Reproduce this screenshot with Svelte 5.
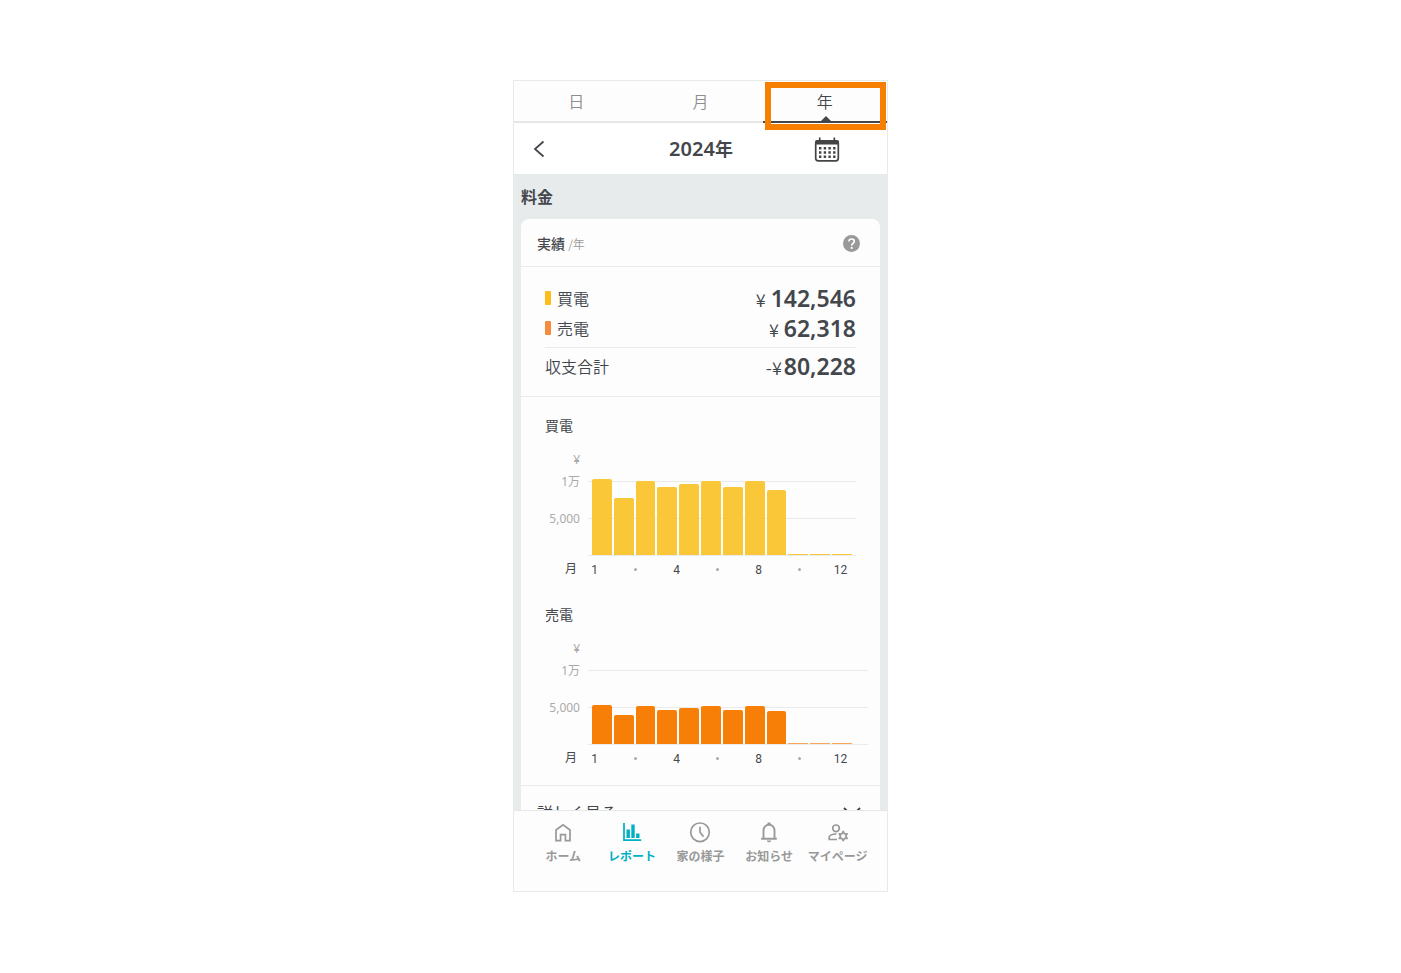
<script>
  const tabs = ['日', '月', '年'];
  let active = $state(2);

  const charts = [
    { name: '買電', kind: 'buy', bars: [76, 57, 74, 68, 71, 74, 68, 74, 65, 1, 1, 1] },
    { name: '売電', kind: 'sell', bars: [39, 29, 38, 34, 36, 38, 34, 38, 33, 1, 1, 1] }
  ];
  const ticks = ['1', '', '4', '', '8', '', '12'];
</script>

<main class="stage">
  <div class="phone">
    <nav class="tabs" aria-label="期間">
      {#each tabs as tab, i}
        <button class="tab" class:active={i === active} onclick={() => (active = i)}>
          {tab}
          {#if i === active}
            <span class="pointer"></span>
            <span class="highlight"></span>
          {/if}
        </button>
      {/each}
    </nav>

    <header class="period">
      <button class="back" aria-label="前の年">
        <svg width="12" height="18" viewBox="0 0 12 18" fill="none" stroke="#43474c" stroke-width="1.8"><path d="M10.5 1.5 2 9l8.5 7.5" /></svg>
      </button>
      <h1>2024<span>年</span></h1>
      <button class="calendar" aria-label="カレンダー">
        <svg width="26" height="26" viewBox="0 0 26 26">
          <rect x="1.7" y="5.2" width="22.6" height="19.6" rx="2.5" fill="#fff" stroke="#444" stroke-width="1.7" />
          <path d="M1 8.500V6Q1 4 3 4h20q2 0 2 2v2.500Z" fill="#444" />
          <path d="M5.700 1.500v4M20.300 1.500v4" stroke="#444" stroke-width="1.700" />
          <path d="M5 12.200h17M5 16.500h17M5 20.800h17" stroke="#444" stroke-width="2.400" stroke-dasharray="2.400 2.300" />
        </svg>
      </button>
    </header>

    <div class="scroll">
      <h2>料金</h2>
      <section class="card">
        <div class="card-head">
          <h3>実績 <small>/年</small></h3>
          <button class="help" aria-label="ヘルプ">
            <svg width="17" height="17" viewBox="0 0 17 17"><circle cx="8.5" cy="8.5" r="8.5" fill="#999" /><path d="M5.900 6.600C5.900 4.900 7 4 8.600 4s2.700 1 2.700 2.400c0 1.900-2.600 2-2.600 4" fill="none" stroke="#fff" stroke-width="1.700" /><circle cx="8.700" cy="12.900" r="1.100" fill="#fff" /></svg>
          </button>
        </div>

        <dl class="summary">
          <div class="line">
            <dt><i class="swatch buy"></i>買電</dt>
            <dd><span>¥</span><b>142,546</b></dd>
          </div>
          <div class="line">
            <dt><i class="swatch sell"></i>売電</dt>
            <dd><span>¥</span><b>62,318</b></dd>
          </div>
          <div class="line total">
            <dt>収支合計</dt>
            <dd><span>-¥</span><b>80,228</b></dd>
          </div>
        </dl>

        <div class="charts">
          {#each charts as chart}
            <figure class="chart {chart.kind}">
              <figcaption>{chart.name}</figcaption>
              <div class="graph">
                <div class="scale">
                  <span>¥</span>
                  <span>1万</span>
                  <span>5,000</span>
                </div>
                <div class="plot">
                  {#each chart.bars as value}
                    <i class="bar" class:empty={value < 2} style:height="{value}px"></i>
                  {/each}
                </div>
                <span class="unit">月</span>
                <div class="ticks">
                  {#each ticks as tick}
                    <span>{#if tick}{tick}{:else}<i class="dot"></i>{/if}</span>
                  {/each}
                </div>
              </div>
            </figure>
          {/each}
        </div>

        <button class="more">
          詳しく見る
          <svg width="18" height="11" viewBox="0 0 18 11" fill="none" stroke="#43474c" stroke-width="2"><path d="m1 1 8 8 8-8" /></svg>
        </button>
      </section>
    </div>

    <nav class="bottom" aria-label="メニュー">
      <a href="#home">
        <svg viewBox="0 0 24 24"><path d="M5 10 12 4.700l7 5.300v10.600h-4.600v-6H9.600v6H5Z" /></svg>
        ホーム
      </a>
      <a href="#report" class="current">
        <svg viewBox="0 0 24 24"><path d="M4 3v17.200H21.200" /><path d="M8.200 9.500v8.500M13 4.500v13.500M17.800 13.500v4.500" stroke-width="3.400" /></svg>
        レポート
      </a>
      <a href="#house">
        <svg viewBox="0 0 24 24"><circle cx="12" cy="12.300" r="9.300" /><path d="M12 6.800v5.500l3.500 4.300" /></svg>
        家の様子
      </a>
      <a href="#news">
        <svg viewBox="0 0 24 24"><path d="M6.500 18.500V10.200a5.500 5.500 0 0 1 11 0v8.300M4.200 18.700h15.600" stroke-width="1.900" /><path d="M12 2.500v2.500" stroke-width="3" /><path d="M9.900 20.400h4.200a2.100 1.900 0 0 1-4.200 0Z" fill="currentColor" stroke="none" /></svg>
        お知らせ
      </a>
      <a href="#mypage">
        <svg viewBox="0 0 24 24"><circle cx="10" cy="8.300" r="3.300" /><path d="M10.500 14C6.200 14.100 3.200 15.400 3.200 17.300v2.200h7.800" /><path d="m17.200 11.500 1.300 2.300 2.600 0-1.300 2.300 1.300 2.300-2.600 0-1.300 2.300-1.300-2.300-2.600 0 1.300-2.300-1.300-2.300 2.600 0Z" stroke-width="1.700" stroke-linejoin="round" /></svg>
        マイページ
      </a>
    </nav>
  </div>
</main>

<style>
  :global(body) {
    margin: 0;
    background: #fff;
  }
  .stage {
    box-sizing: border-box;
    display: flex;
    justify-content: center;
    height: 100vh;
    padding: 80px 0 81px;
    color: #43474c;
    font-family: 'Noto Sans', 'Noto Sans CJK JP', sans-serif;
    font-size: 16px;
    line-height: 24px;
  }
  h1, h2, h3, dl, dd, figure {
    margin: 0;
  }
  button {
    padding: 0;
    border: 0;
    background: none;
    color: inherit;
    font: inherit;
    cursor: pointer;
  }
  svg {
    display: block;
  }
  .phone {
    box-sizing: border-box;
    display: flex;
    flex-direction: column;
    width: 100%;
    max-width: 375px;
    border: 1px solid #e8eaea;
    background: #fdfdfd;
  }
  .tabs {
    display: grid;
    grid-template-columns: repeat(3, 1fr);
    flex: none;
  }
  .tab {
    position: relative;
    height: 42px;
    border-bottom: 2px solid #e6e6e6;
    color: #8e8e8e;
    font-family: 'Noto Sans CJK JP', sans-serif;
    font-weight: 350;
  }
  .tab.active {
    border-color: #43474c;
    color: #43474c;
  }
  .pointer {
    position: absolute;
    bottom: 0;
    left: calc(50% - 4px);
    border: 5px solid transparent;
    border-top: 0;
    border-bottom-color: #43474c;
  }
  .highlight {
    position: absolute;
    inset: 1px 1px -9px 2px;
    border: 6px solid #f77f00;
  }
  .period {
    display: grid;
    grid-template-columns: 1fr auto 1fr;
    align-items: center;
    flex: none;
    height: 51px;
    padding: 0 47px 0 19px;
    background: #fff;
  }
  .period h1 {
    margin-left: 29px;
    font-size: 20px;
    font-weight: 600;
  }
  .period h1 span {
    font-size: 18px;
  }
  .calendar {
    justify-self: end;
  }
  .back {
    justify-self: start;
  }
  .scroll {
    flex: 1;
    min-height: 0;
    padding: 0 7px;
    overflow: hidden;
    background: #e7ebec;
  }
  h2 {
    padding: 11px 0 10px;
    font-size: 16px;
    font-weight: 700;
  }
  .card {
    border-radius: 8px;
    background: #fdfdfd;
  }
  .card-head {
    box-sizing: border-box;
    display: flex;
    align-items: center;
    justify-content: space-between;
    height: 48px;
    padding: 2px 20px 0 16px;
    border-bottom: 1px solid #ebebeb;
  }
  h3 {
    font-family: 'Noto Sans CJK JP', sans-serif;
    font-size: 14px;
    font-weight: 500;
  }
  h3 small {
    color: #999;
    font-size: 12px;
    font-weight: 350;
  }
  .summary {
    padding: 16px 24px 12px;
    border-bottom: 1px solid #ebebeb;
  }
  .line {
    display: flex;
    align-items: center;
    justify-content: space-between;
    height: 30px;
  }
  .total {
    height: 36px;
    margin-top: 4px;
    border-top: 1px solid #ebebeb;
  }
  dt {
    display: flex;
    align-items: center;
    gap: 6px;
    font-family: 'Noto Sans CJK JP', sans-serif;
    font-weight: 350;
  }
  dd {
    display: flex;
    align-items: baseline;
    gap: 5px;
    font-family: 'Noto Sans CJK JP', sans-serif;
    font-size: 18px;
    font-weight: 350;
  }
  dd b {
    font-family: 'Noto Sans', sans-serif;
    font-size: 23px;
    font-weight: 600;
  }
  .total dd {
    gap: 2px;
  }
  .swatch {
    width: 6px;
    height: 14px;
    border-radius: 1px;
  }
  .swatch.buy {
    background: #fcbc19;
  }
  .swatch.sell {
    background: #f68b3e;
  }
  .charts {
    display: grid;
    gap: 21px;
    padding: 17px 0 14px 24px;
    border-bottom: 1px solid #ebebeb;
  }
  figcaption {
    font-size: 14px;
    font-weight: 400;
  }
  .graph {
    display: grid;
    grid-template-columns: 35px 1fr;
    column-gap: 8px;
    margin-top: 12px;
  }
  .scale {
    display: grid;
    grid-template-rows: 20px 24px 50px;
    align-items: center;
    height: 106px;
    color: #aaa;
    font-size: 12px;
    font-weight: 400;
    line-height: 16px;
    text-align: right;
  }
  .plot {
    box-sizing: border-box;
    display: flex;
    align-items: flex-end;
    align-self: end;
    gap: 2px;
    height: 78px;
    margin-right: 24px;
    padding: 0 4px 1px;
    background: linear-gradient(#ebebeb, #ebebeb) 0 100% / 100% 1px no-repeat,
      linear-gradient(#ebebeb, #ebebeb) 0 40px / 100% 1px no-repeat,
      linear-gradient(#ebebeb, #ebebeb) 0 3px / 100% 1px no-repeat;
  }
  .sell .plot {
    margin-right: 12px;
    padding-right: 16px;
  }
  .bar {
    flex: 1;
    border-radius: 2px 2px 0 0;
    background: #fac738;
  }
  .sell .bar {
    background: #f77f08;
  }
  .bar.empty {
    border-radius: 0;
  }
  .sell .bar.empty {
    background: #f9a55a;
  }
  .unit {
    padding-right: 3px;
    font-family: 'Noto Sans CJK JP', sans-serif;
    font-size: 12px;
    font-weight: 400;
    line-height: 24px;
    text-align: right;
  }
  .ticks {
    display: grid;
    grid-template-columns: repeat(7, 1fr);
    margin: 2px 19px 0 -14px;
    font-family: Roboto, sans-serif;
    font-size: 12px;
    text-align: center;
  }
  .dot {
    display: inline-block;
    width: 3px;
    height: 3px;
    border-radius: 50%;
    background: #aaa;
    vertical-align: 3px;
  }
  .more {
    display: flex;
    align-items: center;
    justify-content: space-between;
    width: 100%;
    height: 52px;
    padding: 0 19px 0 16px;
    font-family: 'Noto Sans CJK JP', sans-serif;
    font-weight: 400;
  }
  .bottom {
    box-sizing: border-box;
    display: grid;
    grid-template-columns: repeat(5, 1fr);
    flex: none;
    height: 81px;
    padding: 9px 15px 0;
    border-top: 1px solid #e6e8e8;
  }
  .bottom a {
    display: flex;
    flex-direction: column;
    align-items: center;
    gap: 3px;
    color: #999;
    font-family: 'Noto Sans CJK JP', sans-serif;
    font-size: 12px;
    font-weight: 700;
    line-height: 18px;
    text-decoration: none;
    white-space: nowrap;
  }
  .bottom a.current {
    color: #00b0c4;
  }
  .bottom svg {
    width: 24px;
    height: 24px;
    fill: none;
    stroke: currentColor;
    stroke-width: 1.7;
  }
</style>
